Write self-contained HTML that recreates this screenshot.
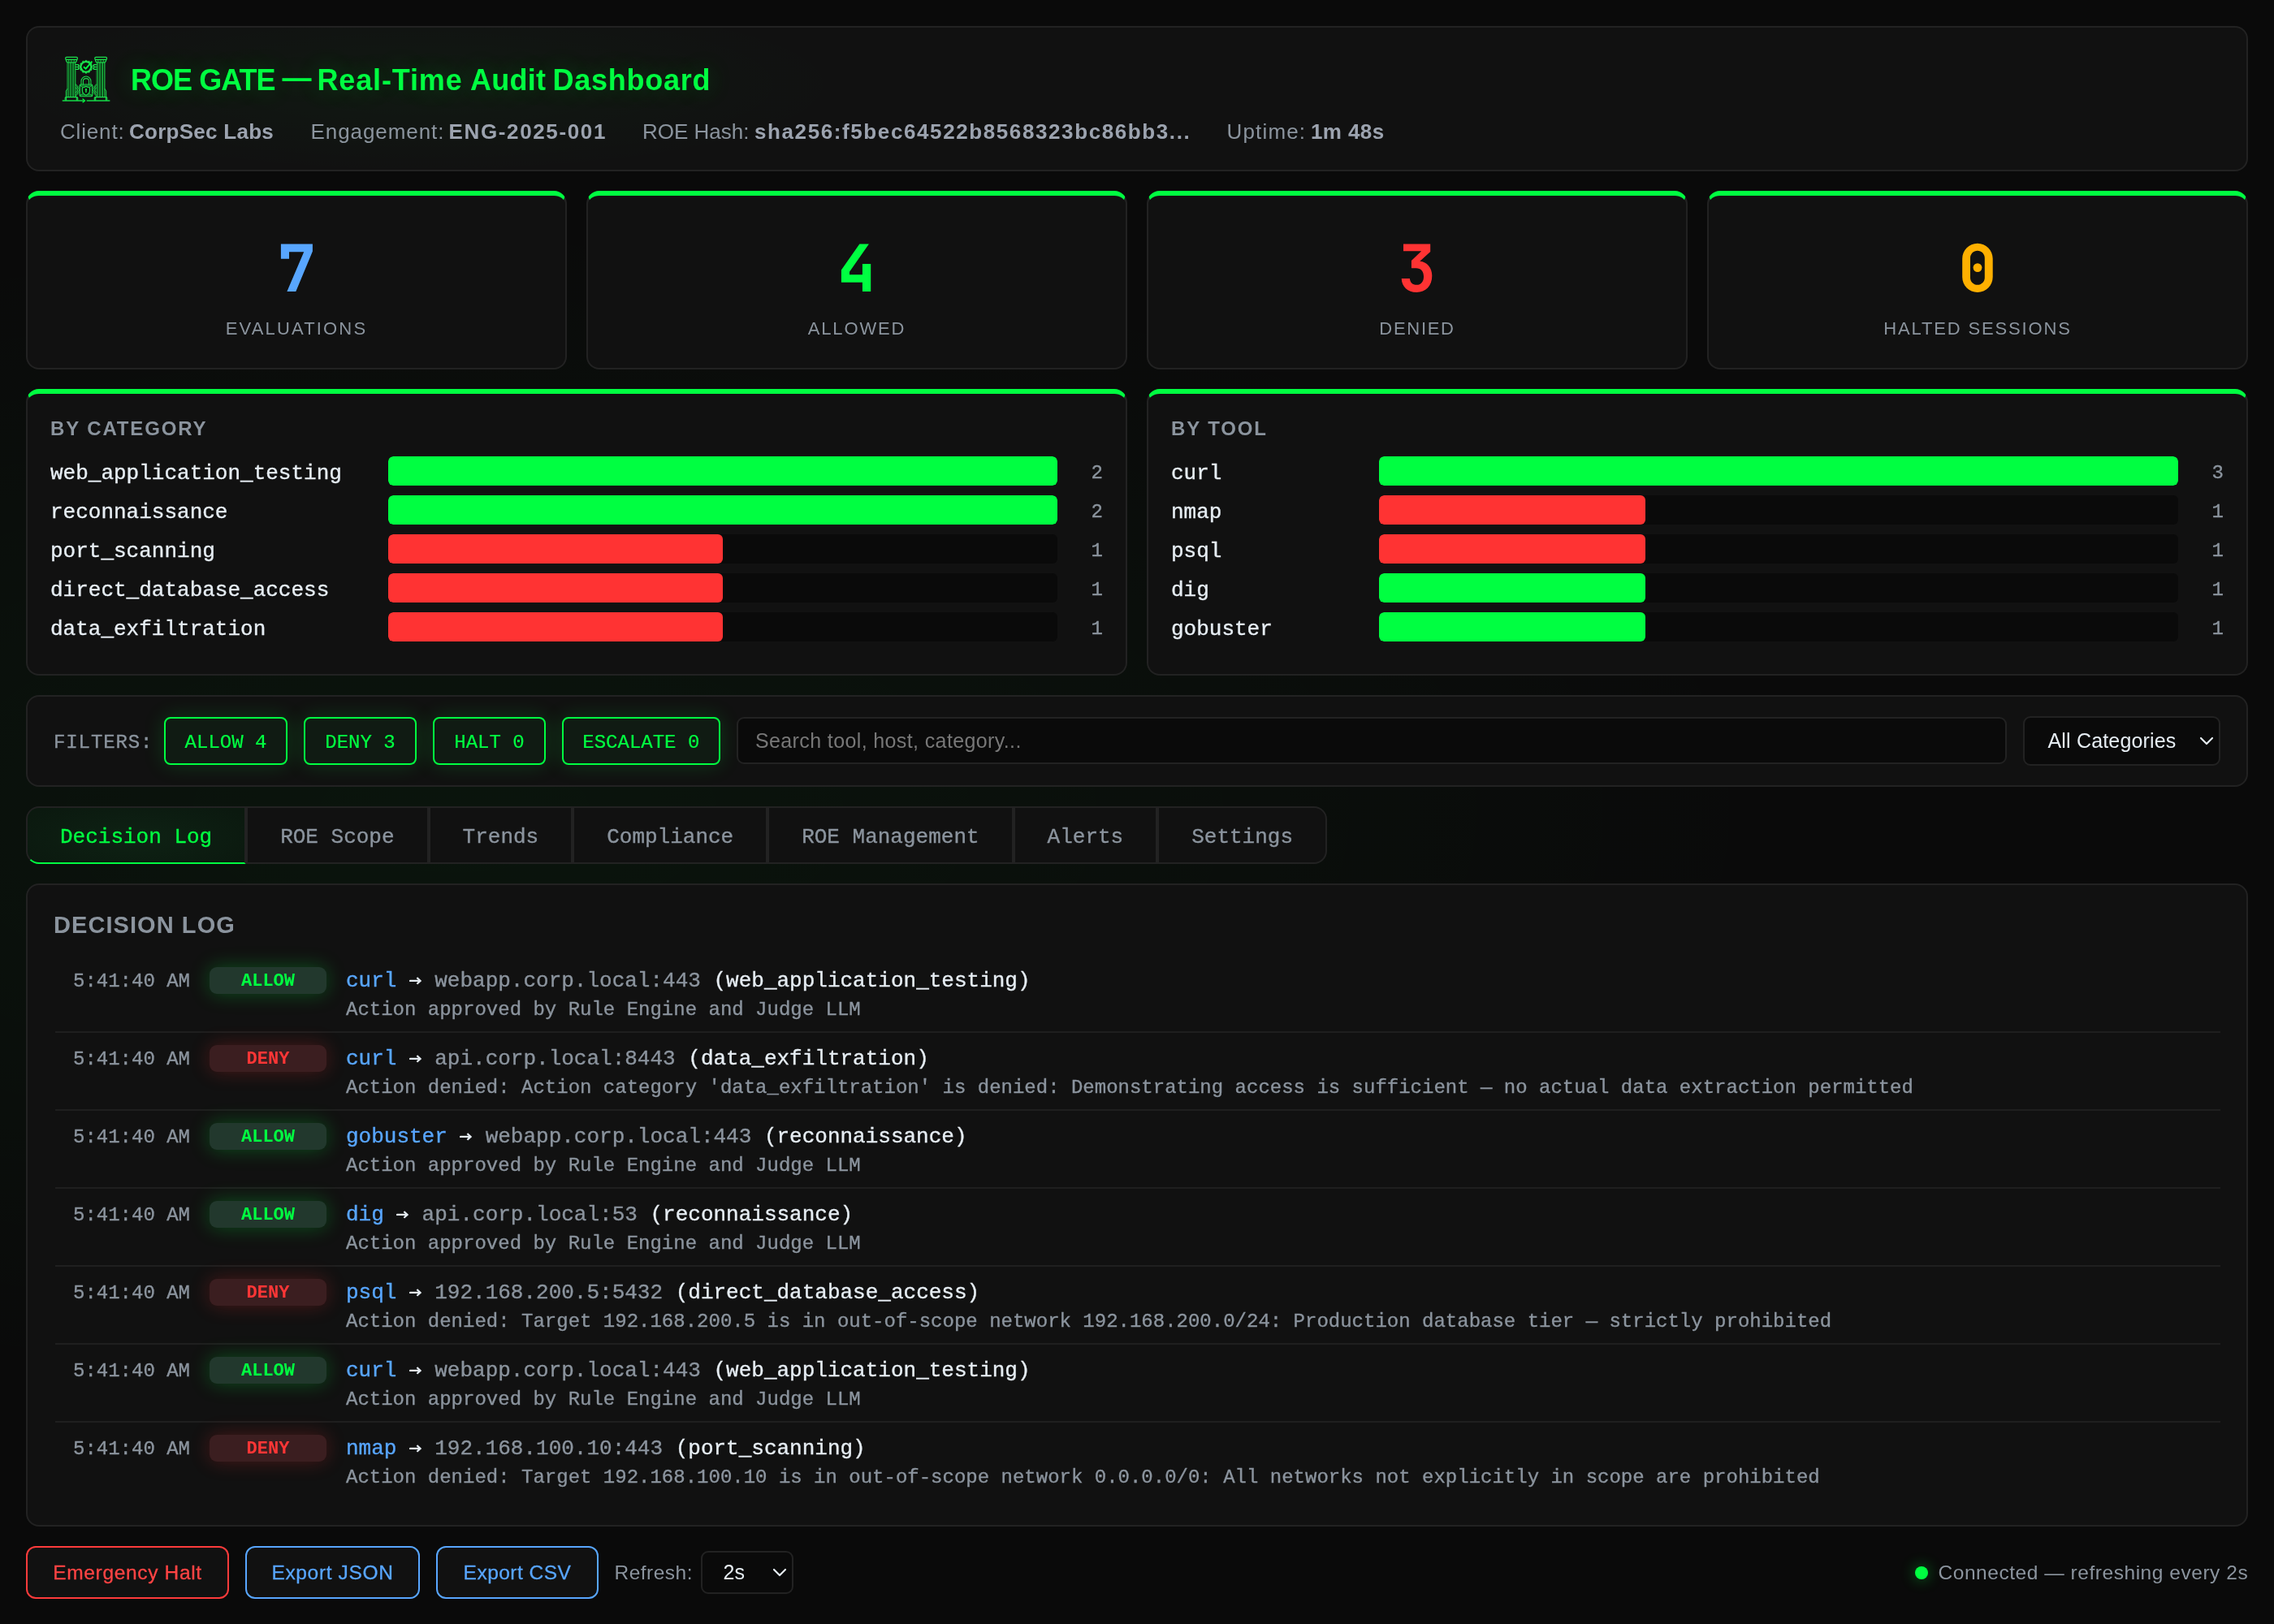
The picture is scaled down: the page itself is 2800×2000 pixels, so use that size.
<!DOCTYPE html>
<html lang="en">
<head>
<meta charset="utf-8">
<title>ROE Gate — Real-Time Audit Dashboard</title>
<style>
*{box-sizing:border-box;margin:0;padding:0}
html,body{width:2800px;height:2000px;overflow:hidden}
body{
  position:relative;
  font-family:"Liberation Sans",sans-serif;
  color:#e6edf3;
  background-color:#0a0a0a;
  background-image:
    radial-gradient(ellipse at 20% 50%, rgba(0,255,65,0.042) 0%, rgba(0,255,65,0) 52%);
}
#root{position:absolute;left:0;top:0;width:2800px;height:2000px;will-change:transform}
.mono{font-family:"Liberation Mono",monospace;-webkit-text-stroke:0.35px}
.row .l,.row .c,.tab,.lr .tm,.lr .m,.lr .s{-webkit-text-stroke:0.35px}
.abs{position:absolute}
.card{position:absolute;background:#111111;border:2px solid #222222;border-radius:16px}
.gtop{border-top:6px solid #00ff41}

/* header */
#hdr{left:32px;top:32px;width:2736px;height:179px;
  background-image:radial-gradient(ellipse 520px 110px at 490px 70px, rgba(0,255,65,0.035), rgba(0,255,65,0) 100%)}
#title span{position:absolute;top:0}
#title{left:161px;top:75px;width:720px;height:48px;line-height:48px;font-size:36px;font-weight:700;color:#00ff41;white-space:nowrap;
  text-shadow:0 0 30px rgba(0,255,65,0.22),0 0 60px rgba(0,255,65,0.10)}
.meta{top:142.6px;height:39px;line-height:39px;font-size:26px;color:#8b949e;white-space:nowrap}
.meta.v{color:#9ca3af;font-weight:700}

/* stats */
.stat{top:235px;width:666px;height:220px}
.stat .num{position:absolute;left:0;right:0;top:44px;text-align:center;font-family:"Liberation Mono",monospace;font-weight:700;font-size:88px;line-height:88px}
.stat .lbl{position:absolute;left:0;right:0;top:148.5px;text-align:center;font-size:22px;line-height:30px;letter-spacing:2px;color:#8b949e}

/* panels */
.panel{top:479px;width:1356px;height:353px}
.panel h3{position:absolute;left:28px;top:26.5px;font-size:24px;line-height:32px;font-weight:700;letter-spacing:1.87px;color:#8b949e;white-space:nowrap}
.row{position:absolute;left:28px;right:28px;height:36px}
.row .l{position:absolute;left:0;top:3px;line-height:36px;font-size:26px;color:#e6edf3;font-family:"Liberation Mono",monospace;white-space:nowrap}
.row .t{position:absolute;top:0;height:36px;background:#0a0a0a;border-radius:6px;overflow:hidden}
.row .f{position:absolute;left:0;top:0;height:36px;border-radius:6px}
.row .c{position:absolute;right:0;top:3px;line-height:36px;font-size:24px;color:#8b949e;font-family:"Liberation Mono",monospace}
.g{background:#00ff41}.r{background:#ff3333}
#pc .t{left:416px;width:824px}
#pt .t{left:256px;width:984px}

/* filters */
#flt{left:32px;top:856px;width:2736px;height:113px}
.chip{position:absolute;top:25px;height:59px;border:2px solid #00ff41;border-radius:8px;color:#00ff41;
  font-family:"Liberation Mono",monospace;font-size:24px;line-height:60px;text-align:center;
  background:rgba(0,255,65,0.045);box-shadow:0 0 26px rgba(0,255,65,0.17);-webkit-text-stroke:0.2px}

/* tabs */
.tab{position:absolute;top:993px;height:71px;border:2px solid #222;background:#111;color:#8b949e;
  font-family:"Liberation Mono",monospace;font-size:26px;line-height:72px;text-align:center;white-space:nowrap}

/* log */
#log{left:32px;top:1088px;width:2736px;height:792px}
.lr{position:absolute;left:34px;right:32px;height:97px;border-bottom:2px solid #1f1f1f}
.lr .tm{position:absolute;left:22px;top:16px;font-size:24px;line-height:36px;color:#8b949e;font-family:"Liberation Mono",monospace;white-space:nowrap}
.lr .bd{position:absolute;left:190px;top:16px;width:144px;height:33px;border-radius:9px;text-align:center;
  font-family:"Liberation Mono",monospace;font-weight:700;font-size:22px;line-height:36px}
.bd.a{background:#22382d;color:#00ff41;box-shadow:0 0 24px rgba(0,255,65,0.26)}
.bd.d{background:#3b1e20;color:#ff3636;box-shadow:0 0 24px rgba(255,51,51,0.24)}
.lr .m{position:absolute;left:358px;top:15px;font-size:26px;line-height:36px;font-family:"Liberation Mono",monospace;white-space:nowrap;color:#8b949e}
.lr .m i{font-style:normal;color:#58a6ff}
.lr .m u{text-decoration:none;color:#e6edf3}
.lr .m .ar{display:inline-block;vertical-align:baseline;fill:none;stroke:#e6edf3;stroke-width:2.2}
.lr .s{position:absolute;left:358px;top:53px;font-size:24px;line-height:32px;font-family:"Liberation Mono",monospace;white-space:nowrap;color:#8b949e}

/* footer */
.btn{position:absolute;top:1904px;height:65px;border:2px solid;border-radius:12px;font-size:24.5px;line-height:61px;text-align:center;background:#111111;white-space:nowrap;-webkit-text-stroke:0.3px}
</style>
</head>
<body>
<div id="root">

<!-- HEADER -->
<div class="card" id="hdr"></div>
<!--LOGO--><svg class="abs" style="left:70px;top:64px" width="72" height="66" viewBox="70 64 72 66" fill="none" stroke="#1ce04d" stroke-width="1.1" stroke-linecap="round" stroke-linejoin="round">
<rect x="82.95" y="77" width="1.40" height="42.4" fill="rgba(0,255,65,0.07)" stroke="none"/><rect x="86.15" y="77" width="1.20" height="42.4" fill="rgba(0,255,65,0.07)" stroke="none"/><rect x="89.20" y="77" width="1.20" height="42.4" fill="rgba(0,255,65,0.07)" stroke="none"/><rect x="92.15" y="77" width="0.80" height="42.4" fill="rgba(0,255,65,0.07)" stroke="none"/><rect x="84.35" y="77" width="1.80" height="42.4" fill="#050705" stroke="none"/><rect x="87.35" y="77" width="1.85" height="42.4" fill="#050705" stroke="none"/><rect x="90.40" y="77" width="1.75" height="42.4" fill="#050705" stroke="none"/><path d="M82.95,77 V119.4 M84.35,77 V119.4 M86.15,77 V119.4 M87.35,77 V119.4 M89.20,77 V119.4 M90.40,77 V119.4 M92.15,77 V119.4 M92.95,77 V119.4" stroke-width="0.72"/><rect x="80.70" y="70.4" width="14.70" height="3" rx="1.2" stroke-width="1.2"/><path d="M81.20,73.4 C81.40,75.6 82.20,76.7 83.10,77 H92.80 C93.70,76.7 94.50,75.6 94.80,73.4" fill="rgba(0,255,65,0.12)"/><path d="M84.70,74.2 V76.6 M87.90,74.2 V76.6 M91.20,74.2 V76.6" stroke-width="0.72"/><path d="M80.20,123.4 V120.6 Q80.20,119.6 81.20,119.6 H94.70 Q95.70,119.6 95.70,120.6 V123.4"/><path d="M81.60,119.6 V123.4 M94.30,119.6 V123.4"/>
<rect x="119.05" y="77" width="1.40" height="42.4" fill="rgba(0,255,65,0.07)" stroke="none"/><rect x="122.25" y="77" width="1.20" height="42.4" fill="rgba(0,255,65,0.07)" stroke="none"/><rect x="125.30" y="77" width="1.20" height="42.4" fill="rgba(0,255,65,0.07)" stroke="none"/><rect x="128.25" y="77" width="0.80" height="42.4" fill="rgba(0,255,65,0.07)" stroke="none"/><rect x="120.45" y="77" width="1.80" height="42.4" fill="#050705" stroke="none"/><rect x="123.45" y="77" width="1.85" height="42.4" fill="#050705" stroke="none"/><rect x="126.50" y="77" width="1.75" height="42.4" fill="#050705" stroke="none"/><path d="M119.05,77 V119.4 M120.45,77 V119.4 M122.25,77 V119.4 M123.45,77 V119.4 M125.30,77 V119.4 M126.50,77 V119.4 M128.25,77 V119.4 M129.05,77 V119.4" stroke-width="0.72"/><rect x="116.80" y="70.4" width="14.70" height="3" rx="1.2" stroke-width="1.2"/><path d="M117.30,73.4 C117.50,75.6 118.30,76.7 119.20,77 H128.90 C129.80,76.7 130.60,75.6 130.90,73.4" fill="rgba(0,255,65,0.12)"/><path d="M120.80,74.2 V76.6 M124.00,74.2 V76.6 M127.30,74.2 V76.6" stroke-width="0.72"/><path d="M116.30,123.4 V120.6 Q116.30,119.6 117.30,119.6 H130.80 Q131.80,119.6 131.80,120.6 V123.4"/><path d="M117.70,119.6 V123.4 M130.40,119.6 V123.4"/>
<path d="M82.8,109.6 L81.3,112.2 V119.6 M129.2,109.6 L130.7,112.2 V119.6" stroke-width="1"/>
<path d="M104.77,75.14 L105.07,74.39 L106.73,74.39 L107.03,75.14 L108.50,75.53 L109.13,75.04 L110.57,75.87 L110.46,76.67 L111.53,77.74 L112.33,77.63 L113.16,79.07 L112.67,79.70 L113.06,81.17 L113.81,81.47 L113.81,83.13 L113.06,83.43 L112.67,84.90 L113.16,85.53 L112.33,86.97 L111.53,86.86 L110.46,87.93 L110.57,88.73 L109.13,89.56 L108.50,89.07 L107.03,89.46 L106.73,90.21 L105.07,90.21 L104.77,89.46 L103.30,89.07 L102.67,89.56 L101.23,88.73 L101.34,87.93 L100.27,86.86 L99.47,86.97 L98.64,85.53 L99.13,84.90 L98.74,83.43 L97.99,83.13 L97.99,81.47 L98.74,81.17 L99.13,79.70 L98.64,79.07 L99.47,77.63 L100.27,77.74 L101.34,76.67 L101.23,75.87 L102.67,75.04 L103.30,75.53 Z" fill="#1ce04d" stroke="#1ce04d" stroke-width="0.6"/><circle cx="105.9" cy="82.3" r="5.3" fill="#0c120d" stroke="none"/><path d="M102.9,82.2 L105.6,84.6 L113.4,75.7" stroke="#00ff41" stroke-width="1.9" stroke-linecap="butt" stroke-linejoin="miter"/>
<path d="M93.2,79.6 H96.6 V85.4 H93.2 M93.2,82.5 H96.6 M96.6,80.7 H98.1 M96.6,84.3 H98.1"/><path d="M119,79.6 H115.6 V85.4 H119 M119,82.5 H115.6 M115.6,80.7 H114.1 M115.6,84.3 H114.1"/>
<path d="M100,104 V100 A5.95,5.95 0 0 1 111.9,100 V104 M102.4,104 V100.2 A3.55,3.55 0 0 1 109.5,100.2 V104" stroke-width="1.05"/><rect x="98.1" y="104" width="15.7" height="14.7" rx="1.4" fill="rgba(0,255,65,0.10)"/><path d="M98.6,105.9 H113.3 M98.6,116.9 H113.3" stroke-dasharray="1.2 0.9" stroke-width="0.9"/><path d="M98.4,104.6 L113.5,118.2 M113.5,104.6 L98.4,118.2" stroke-width="0.8" opacity="0.8"/><path d="M105.95,106.6 C104,107.6 102.6,107.9 101.4,108 V111.5 C101.4,114.6 103.6,116.3 105.95,117.2 C108.3,116.3 110.5,114.6 110.5,111.5 V108 C109.3,107.9 107.9,107.6 105.95,106.6 Z" fill="#0b140d"/><circle cx="105.95" cy="110.2" r="1.15" fill="#1ce04d" stroke="none"/><rect x="105.25" y="110.6" width="1.4" height="3.5" rx="0.6" fill="#1ce04d" stroke="none"/>
<path d="M93.2,104.5 L98,110.8 L93.2,117.5 M93.2,108 L96.2,110.9 L93.2,114 M95,106.8 V115" stroke-width="0.85"/><path d="M118.8,104.5 L114,110.8 L118.8,117.5 M118.8,108 L115.8,110.9 L118.8,114 M117,106.8 V115" stroke-width="0.85"/><path d="M93.4,118.6 L98,113.4 M118.6,118.6 L114,113.4 M93.4,103.6 L98,108.4 M118.6,103.6 L114,108.4" stroke-width="0.8" opacity="0.8"/>
<path d="M77.3,123.9 H104 M107.2,123.9 H134.8" stroke-width="1.5" stroke="#14d947"/><path d="M102,121.9 L104.6,123.9 L102,125.9" stroke-width="1.3" stroke="#00ff41"/>
</svg><!--/LOGO-->
<div class="abs" id="title"><span style="left:0;letter-spacing:-0.97px">ROE GATE</span><span style="left:186.4px;top:-3.5px">—</span><span style="left:229.5px;letter-spacing:0.85px">Real-Time</span><span style="left:418px;letter-spacing:0.23px">Audit</span><span style="left:519.5px;letter-spacing:0.75px">Dashboard</span></div>
<div class="abs meta" style="left:74px;letter-spacing:0.83px">Client:</div>
<div class="abs meta v" style="left:159px;letter-spacing:0.27px">CorpSec Labs</div>
<div class="abs meta" style="left:382.5px;letter-spacing:0.93px">Engagement:</div>
<div class="abs meta v" style="left:552.5px;letter-spacing:1.64px">ENG-2025-001</div>
<div class="abs meta" style="left:791px">ROE Hash:</div>
<div class="abs meta v" style="left:929px;letter-spacing:1.6px">sha256:f5bec64522b8568323bc86bb3...</div>
<div class="abs meta" style="left:1510.5px;letter-spacing:1.17px">Uptime:</div>
<div class="abs meta v" style="left:1614px;letter-spacing:0.4px">1m 48s</div>

<!-- STATS -->
<div class="card gtop stat" style="left:32px"><div class="lbl" style="letter-spacing:2.15px">EVALUATIONS</div></div>
<div class="card gtop stat" style="left:722px"><div class="lbl" style="letter-spacing:1.88px">ALLOWED</div></div>
<div class="card gtop stat" style="left:1412px"><div class="lbl" style="letter-spacing:1.7px">DENIED</div></div>
<div class="card gtop stat" style="left:2102px"><div class="lbl" style="letter-spacing:1.84px">HALTED SESSIONS</div></div>


<!-- BIG DIGITS -->
<svg class="abs" style="left:300px;top:280px" width="130" height="100" viewBox="0 0 130 100"><path fill="#58a6ff" d="M45.9,20.6 H84.9 V29.6 L64.3,79 H53.4 L74.2,30.2 H56 V38.7 H45.9 Z"/></svg>
<svg class="abs" style="left:990px;top:280px" width="130" height="100" viewBox="0 0 130 100"><path fill="#00ff41" d="M68.35,20.6 H79.9 L56,54.8 V58.2 H71.9 V45.1 H82.2 V79 H71.9 V67.7 H45.9 V52.6 Z"/></svg>
<svg class="abs" style="left:1680px;top:280px" width="130" height="100" viewBox="0 0 130 100"><path fill="#ff3333" d="M48,20.6 H81.2 V29.9 L68.3,41.7 C77,42.5 83.3,49.5 83.3,59.5 C83.3,72 75.5,79.9 64.3,79.9 C53,79.9 46.2,73 45.7,62.9 H55.9 C56.3,67.8 59.3,70.8 64.3,70.8 C69.8,70.8 73,66.8 73,60.7 C73,54.2 69.6,50.2 63.5,50.2 H57.9 V40.9 L70.2,29.2 H48 Z"/></svg>
<svg class="abs" style="left:2370px;top:280px" width="130" height="100" viewBox="0 0 130 100"><path fill="#ffb000" fill-rule="evenodd" d="M64.95,19.7 C75.3,19.7 83.7,28.1 83.7,38.45 V61.15 C83.7,71.5 75.3,79.9 64.95,79.9 C54.6,79.9 46.2,71.5 46.2,61.15 V38.45 C46.2,28.1 54.6,19.7 64.95,19.7 Z M64.9,28.8 C60,28.8 56,32.8 56,37.7 V61.9 C56,66.8 60,70.8 64.9,70.8 C69.8,70.8 73.8,66.8 73.8,61.9 V37.7 C73.8,32.8 69.8,28.8 64.9,28.8 Z"/><circle cx="65" cy="49.6" r="5.4" fill="#ffb000"/></svg>

<!-- PANELS -->
<div class="card gtop panel" id="pc" style="left:32px">
  <h3>BY CATEGORY</h3>
  <div class="row" style="top:77px"><span class="l">web_application_testing</span><div class="t"><div class="f g" style="width:824px"></div></div><span class="c">2</span></div>
  <div class="row" style="top:125px"><span class="l">reconnaissance</span><div class="t"><div class="f g" style="width:824px"></div></div><span class="c">2</span></div>
  <div class="row" style="top:173px"><span class="l">port_scanning</span><div class="t"><div class="f r" style="width:412px"></div></div><span class="c">1</span></div>
  <div class="row" style="top:221px"><span class="l">direct_database_access</span><div class="t"><div class="f r" style="width:412px"></div></div><span class="c">1</span></div>
  <div class="row" style="top:269px"><span class="l">data_exfiltration</span><div class="t"><div class="f r" style="width:412px"></div></div><span class="c">1</span></div>
</div>
<div class="card gtop panel" id="pt" style="left:1412px">
  <h3>BY TOOL</h3>
  <div class="row" style="top:77px"><span class="l">curl</span><div class="t"><div class="f g" style="width:984px"></div></div><span class="c">3</span></div>
  <div class="row" style="top:125px"><span class="l">nmap</span><div class="t"><div class="f r" style="width:328px"></div></div><span class="c">1</span></div>
  <div class="row" style="top:173px"><span class="l">psql</span><div class="t"><div class="f r" style="width:328px"></div></div><span class="c">1</span></div>
  <div class="row" style="top:221px"><span class="l">dig</span><div class="t"><div class="f g" style="width:328px"></div></div><span class="c">1</span></div>
  <div class="row" style="top:269px"><span class="l">gobuster</span><div class="t"><div class="f g" style="width:328px"></div></div><span class="c">1</span></div>
</div>

<!-- FILTERS -->
<div class="card" id="flt">
  <div class="abs mono" style="left:32px;top:39px;font-size:24px;letter-spacing:0.9px;line-height:36px;color:#8b949e">FILTERS:</div>
  <div class="chip" style="left:168px;width:152px">ALLOW 4</div>
  <div class="chip" style="left:340.3px;width:138.4px">DENY 3</div>
  <div class="chip" style="left:499.3px;width:138.4px">HALT 0</div>
  <div class="chip" style="left:657.5px;width:195.6px">ESCALATE 0</div>
  <div class="abs" style="left:873px;top:25px;width:1564px;height:58px;border:2px solid #222;border-radius:9px;background:#0a0a0a;
       font-size:25px;letter-spacing:0.38px;line-height:54px;padding-left:21px;color:#777777">Search tool, host, category...</div>
  <div class="abs" style="left:2457px;top:24px;width:243px;height:61px;border:2px solid #222;border-radius:9px;background:#0a0a0a;
       font-size:25px;letter-spacing:0.17px;line-height:57px;padding-left:28.5px;color:#e6edf3">All Categories
       <svg class="abs" style="right:5px;top:18px" width="20" height="20" viewBox="0 0 20 20"><path d="M3 7 L10 14 L17 7" fill="none" stroke="#e6edf3" stroke-width="2.2" stroke-linecap="round" stroke-linejoin="round"/></svg>
  </div>
</div>

<!-- TABS -->
<div class="tab" style="left:32px;width:271.2px;border-radius:16px 0 0 16px;color:#00ff41;border-bottom:2.5px solid #00ff41;
     background:radial-gradient(ellipse 160px 50px at 50% 55%,#0e2214,#0b190f)">Decision Log</div>
<div class="tab" style="left:303.2px;width:224.4px">ROE Scope</div>
<div class="tab" style="left:527.6px;width:177.6px">Trends</div>
<div class="tab" style="left:705.2px;width:240px">Compliance</div>
<div class="tab" style="left:945.2px;width:302.4px">ROE Management</div>
<div class="tab" style="left:1247.6px;width:177.6px">Alerts</div>
<div class="tab" style="left:1425.2px;width:208.8px;border-radius:0 16px 16px 0">Settings</div>

<!-- LOG -->
<div class="card" id="log">
  <div class="abs" style="left:32px;top:29px;font-size:29px;line-height:40px;font-weight:700;letter-spacing:1.07px;color:#8b949e;white-space:nowrap">DECISION LOG</div>
  <div class="lr" style="top:85px"><span class="tm">5:41:40 AM</span><span class="bd a">ALLOW</span><span class="m"><i>curl</i> <svg class="ar" width="15.6" height="14" viewBox="0 0 15.6 14"><path d="M0.9,6.9 H13" stroke-linecap="round"/><path d="M9.4,3 L13.6,6.9 L9.4,10.8" stroke-linejoin="miter"/></svg> webapp.corp.local:443 <u>(web_application_testing)</u></span><span class="s">Action approved by Rule Engine and Judge LLM</span></div>
  <div class="lr" style="top:181px"><span class="tm">5:41:40 AM</span><span class="bd d">DENY</span><span class="m"><i>curl</i> <svg class="ar" width="15.6" height="14" viewBox="0 0 15.6 14"><path d="M0.9,6.9 H13" stroke-linecap="round"/><path d="M9.4,3 L13.6,6.9 L9.4,10.8" stroke-linejoin="miter"/></svg> api.corp.local:8443 <u>(data_exfiltration)</u></span><span class="s">Action denied: Action category 'data_exfiltration' is denied: Demonstrating access is sufficient — no actual data extraction permitted</span></div>
  <div class="lr" style="top:277px"><span class="tm">5:41:40 AM</span><span class="bd a">ALLOW</span><span class="m"><i>gobuster</i> <svg class="ar" width="15.6" height="14" viewBox="0 0 15.6 14"><path d="M0.9,6.9 H13" stroke-linecap="round"/><path d="M9.4,3 L13.6,6.9 L9.4,10.8" stroke-linejoin="miter"/></svg> webapp.corp.local:443 <u>(reconnaissance)</u></span><span class="s">Action approved by Rule Engine and Judge LLM</span></div>
  <div class="lr" style="top:373px"><span class="tm">5:41:40 AM</span><span class="bd a">ALLOW</span><span class="m"><i>dig</i> <svg class="ar" width="15.6" height="14" viewBox="0 0 15.6 14"><path d="M0.9,6.9 H13" stroke-linecap="round"/><path d="M9.4,3 L13.6,6.9 L9.4,10.8" stroke-linejoin="miter"/></svg> api.corp.local:53 <u>(reconnaissance)</u></span><span class="s">Action approved by Rule Engine and Judge LLM</span></div>
  <div class="lr" style="top:469px"><span class="tm">5:41:40 AM</span><span class="bd d">DENY</span><span class="m"><i>psql</i> <svg class="ar" width="15.6" height="14" viewBox="0 0 15.6 14"><path d="M0.9,6.9 H13" stroke-linecap="round"/><path d="M9.4,3 L13.6,6.9 L9.4,10.8" stroke-linejoin="miter"/></svg> 192.168.200.5:5432 <u>(direct_database_access)</u></span><span class="s">Action denied: Target 192.168.200.5 is in out-of-scope network 192.168.200.0/24: Production database tier — strictly prohibited</span></div>
  <div class="lr" style="top:565px"><span class="tm">5:41:40 AM</span><span class="bd a">ALLOW</span><span class="m"><i>curl</i> <svg class="ar" width="15.6" height="14" viewBox="0 0 15.6 14"><path d="M0.9,6.9 H13" stroke-linecap="round"/><path d="M9.4,3 L13.6,6.9 L9.4,10.8" stroke-linejoin="miter"/></svg> webapp.corp.local:443 <u>(web_application_testing)</u></span><span class="s">Action approved by Rule Engine and Judge LLM</span></div>
  <div class="lr" style="top:661px;border-bottom:none"><span class="tm">5:41:40 AM</span><span class="bd d">DENY</span><span class="m"><i>nmap</i> <svg class="ar" width="15.6" height="14" viewBox="0 0 15.6 14"><path d="M0.9,6.9 H13" stroke-linecap="round"/><path d="M9.4,3 L13.6,6.9 L9.4,10.8" stroke-linejoin="miter"/></svg> 192.168.100.10:443 <u>(port_scanning)</u></span><span class="s">Action denied: Target 192.168.100.10 is in out-of-scope network 0.0.0.0/0: All networks not explicitly in scope are prohibited</span></div>
</div>

<!-- FOOTER -->
<div class="btn" style="left:32px;width:250px;border-color:#ff3b3b;color:#ff4444;letter-spacing:0.66px">Emergency Halt</div>
<div class="btn" style="left:302px;width:215px;border-color:#58a6ff;color:#58a6ff;letter-spacing:0.65px">Export JSON</div>
<div class="btn" style="left:537px;width:200px;border-color:#58a6ff;color:#58a6ff;letter-spacing:0.48px">Export CSV</div>
<div class="abs" style="left:756.5px;top:1916.5px;font-size:24.5px;letter-spacing:0.49px;line-height:40px;color:#8b949e">Refresh:</div>
<div class="abs" style="left:863px;top:1910px;width:114px;height:53px;border:2px solid #222;border-radius:9px;background:#0a0a0a;font-size:25px;line-height:49px;padding-left:25.5px;color:#e6edf3">2s
  <svg class="abs" style="right:5px;top:14px" width="20" height="20" viewBox="0 0 20 20"><path d="M3 7 L10 14 L17 7" fill="none" stroke="#e6edf3" stroke-width="2.2" stroke-linecap="round" stroke-linejoin="round"/></svg>
</div>
<div class="abs" style="left:2358px;top:1929px;width:16px;height:16px;border-radius:50%;background:#00ff41;box-shadow:0 0 18px rgba(0,255,65,0.45)"></div>
<div class="abs" id="conn" style="left:2386.5px;top:1916.5px;font-size:24.5px;letter-spacing:0.54px;line-height:40px;color:#8b949e;white-space:nowrap">Connected — refreshing every 2s</div>

</div>
</body>
</html>
